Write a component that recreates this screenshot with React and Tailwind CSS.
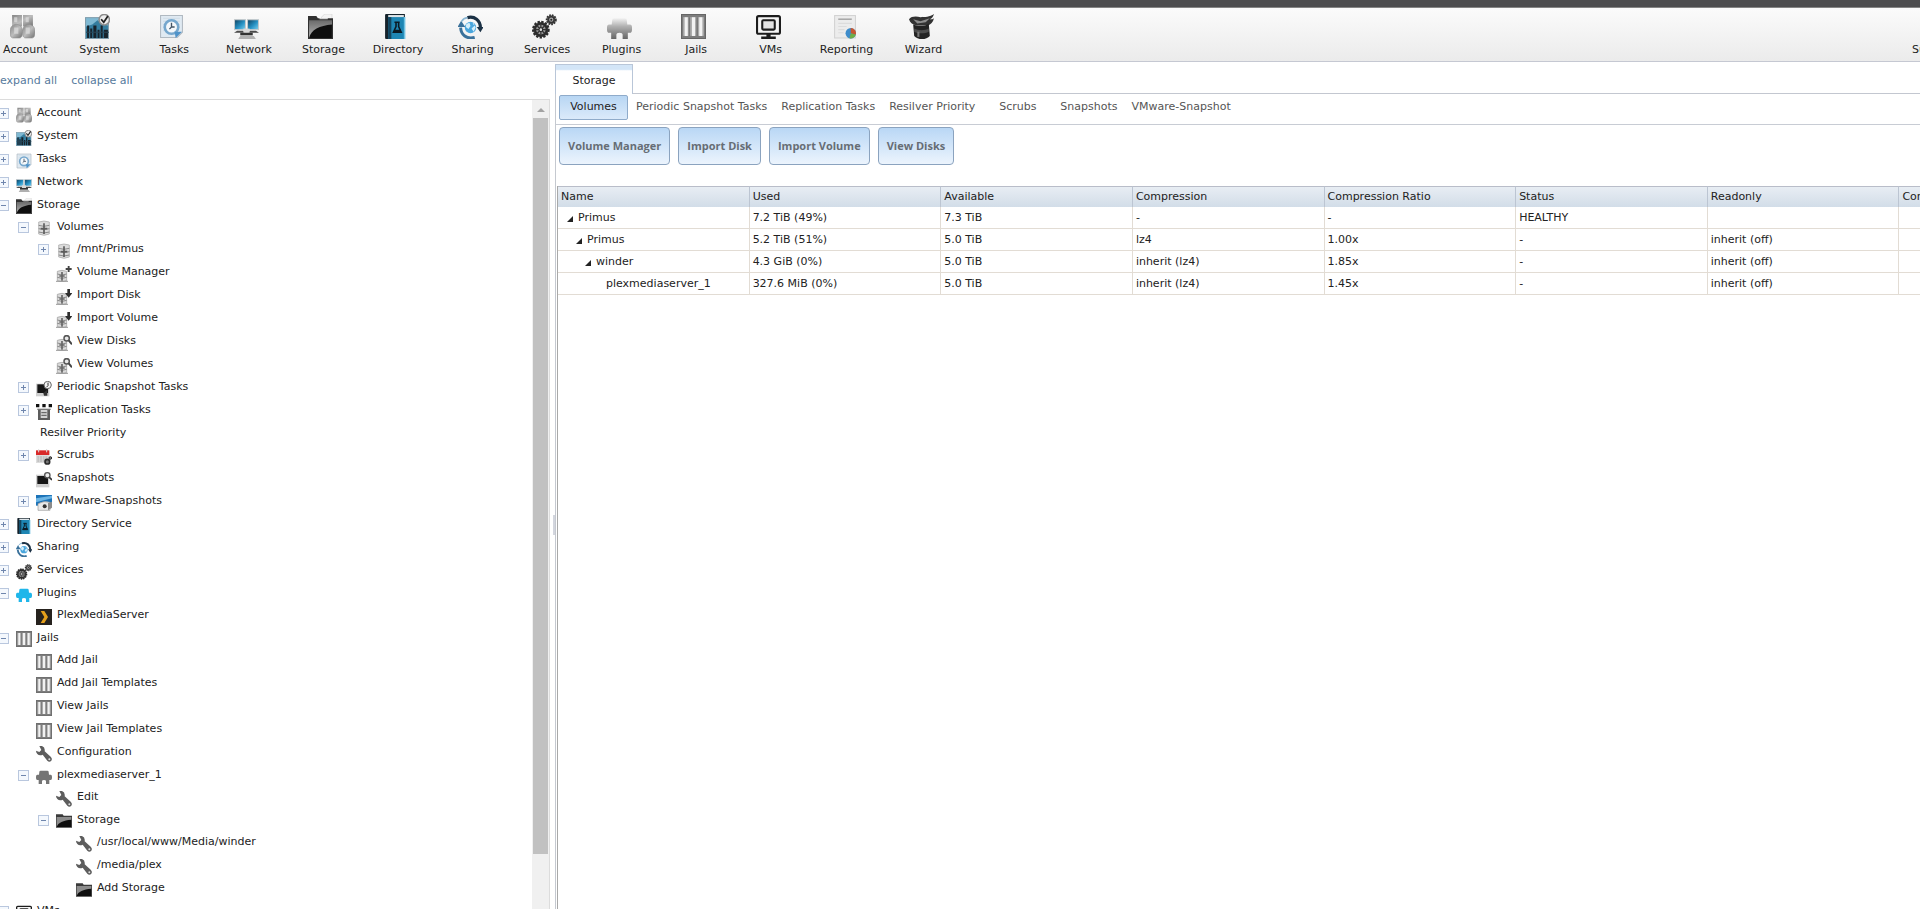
// src/App.jsx
import React, { useState } from "react";

/* ---------- Icons ---------- */

const AccountIcon = (props) => (
  <svg viewBox="0 0 24 24" {...props}>
    <defs>
      <linearGradient id="acc" x1="0" x2="1" y1="0" y2="1">
        <stop offset="0" stopColor="#858585" />
        <stop offset=".5" stopColor="#bdbdbd" />
        <stop offset="1" stopColor="#707070" />
      </linearGradient>
    </defs>
    <path d="M2 1h9.500v11H2zM12.500 1H22v11h-9.500z" fill="url(#acc)" />
    <path d="M0 17c0-5 3-7 6-7s6 2 6 7c0 4-1 6-3 6H3c-2 0-3-2-3-6z" fill="url(#acc)" stroke="#8d8d8d" strokeWidth=".6" />
    <path d="M12 17c0-5 3-7 6-7s6 2 6 7c0 4-1 6-3 6h-6c-2 0-3-2-3-6z" fill="url(#acc)" stroke="#8d8d8d" strokeWidth=".6" />
    <path d="M4 3h3v5H4zM15 3h3v5h-3zM4 13h4v6H4zM15 13h4v6h-4z" fill="#dedede" opacity=".7" />
  </svg>
);

const SystemIcon = (props) => (
  <svg viewBox="0 0 24 24" {...props}>
    <rect x=".5" y="3.500" width="22" height="20" fill="#7fb9d3" stroke="#7f9dac" />
    <path d="M1 12l6-2 5-4 6 4 4 1v12H1z" fill="#347d9f" />
    <path d="M2 11h2v12H2zM5 14h2v9H5zM8 11h3v12H8zM12 15h2v8h-2zM15 11h2v12h-2zM18 15h4v8h-4z" fill="#17232c" />
    <path d="M1 17h22v1H1z" fill="#2a4656" />
    <circle cx="18.500" cy="5.500" r="5" fill="#eee" stroke="#8c8c8c" strokeWidth="1.500" />
    <path d="M15.500 5l2.500 3 4-6" fill="none" stroke="#222" strokeWidth="1.700" />
  </svg>
);

const TasksIcon = (props) => (
  <svg viewBox="0 0 24 24" {...props}>
    <path d="M1.500 1.500h21v16l-5 5h-16z" fill="#e0eaf2" stroke="#b0b9c1" />
    <path d="M4 4h16M4 7h16M4 10h16M4 13h16M4 16h13" stroke="#cddbe6" />
    <circle cx="12" cy="12.500" r="6.500" fill="#f4f8fb" stroke="#76a7cd" strokeWidth="2.500" />
    <path d="M12 8.500v4h3M12 12.500l-2 2" stroke="#456" strokeWidth="1.300" fill="none" />
    <path d="M15 17h7l-6 6z" fill="#4f93c9" />
  </svg>
);

const NetworkIcon = (props) => (
  <svg viewBox="0 0 24 24" {...props}>
    <defs>
      <linearGradient id="scr" x1="0" x2="1" y1="0" y2="1">
        <stop offset="0" stopColor="#0f3f5c" />
        <stop offset=".55" stopColor="#2691c4" />
        <stop offset="1" stopColor="#7fd0ee" />
      </linearGradient>
    </defs>
    <rect x=".5" y="5.500" width="10.500" height="9.500" fill="url(#scr)" stroke="#c3c8cb" />
    <rect x="13" y="5.500" width="10.500" height="9.500" fill="url(#scr)" stroke="#c3c8cb" />
    <path d="M3 16h6l1 2H0zM15 16h6l3 2H14z" fill="#4a4a4a" />
    <path d="M9 14h6v4H9z" fill="#d9d9d9" />
    <path d="M6 18h12v2.500H6z" fill="#333" />
    <path d="M6 21h13l2 3H4z" fill="#b0b0b0" />
  </svg>
);

const StorageIcon = (props) => (
  <svg viewBox="0 0 24 24" {...props}>
    <defs>
      <linearGradient id="fld" x1="0" x2="0" y1="0" y2="1">
        <stop offset="0" stopColor="#6b6b6b" />
        <stop offset="1" stopColor="#b5b5b5" />
      </linearGradient>
    </defs>
    <path d="M13 3l3-3h7v6H13z" fill="#f3f3f3" stroke="#d0d0d0" strokeWidth=".6" />
    <path d="M0 2h8l1.500 2H24v20H0z" fill="#303030" />
    <path d="M1 6h22v17H1z" fill="url(#fld)" />
    <path d="M1 23C3 15 11 11 23 10v13z" fill="#0e0e0e" />
    <path d="M11 4h8v1h-8z" fill="#e9e9e9" />
  </svg>
);

const DirectoryIcon = (props) => (
  <svg viewBox="0 0 24 24" {...props}>
    <path d="M2 1q0-1 1-1h18v3H6v21H3q-1 0-1-1z" fill="#16232c" />
    <path d="M5 1h15v2H5z" fill="#dfe6ea" />
    <path d="M5 3h16v21H5z" fill="#1e86b4" />
    <path d="M5 3h3v21H5z" fill="#14455f" />
    <path d="M20 3h1.500v21H20z" fill="#6fc1e2" />
    <path d="M11 8h5M12.500 8v4L10 17.500h7.500L15 12V8" fill="none" stroke="#0b1a24" strokeWidth="1.500" />
    <path d="M11 15h5.500l1 2.500H10z" fill="#0b1a24" />
  </svg>
);

const SharingIcon = (props) => (
  <svg viewBox="0 0 24 24" {...props}>
    <circle cx="12" cy="13" r="5.500" fill="#4aa6dd" />
    <path d="M8 9.500l3-1 1 3-2 3-2.500-2zM13 14l3-3 1 2-2 4zM14 8.500l2 1-1 1z" fill="#d6effb" />
    <path d="M9 3.500c7-2 12.500 3 12.500 9.500" fill="none" stroke="#1b3145" strokeWidth="3" />
    <path d="M18 12.500h6.500l-3 5z" fill="#1b3145" />
    <path d="M16 22.500C8 24.500 3 20 2.500 13" fill="none" stroke="#3a719b" strokeWidth="2.800" />
    <path d="M-.5 12.500l3.500-6 4 6z" fill="#3a719b" />
    <path d="M3.500 7C5 4.500 7 3.800 9 3.500" fill="none" stroke="#8ab6d3" strokeWidth="1.500" />
  </svg>
);

const ServicesIcon = (props) => (
  <svg viewBox="0 0 24 24" {...props}>
    <circle cx="8.500" cy="15" r="7.400" fill="#555" stroke="#2b2b2b" strokeWidth="2.200" strokeDasharray="2.200 1.300" />
    <circle cx="8.500" cy="15" r="5.600" fill="#9b9b9b" stroke="#2b2b2b" strokeWidth="2" />
    <path d="M8.500 10v10M3.500 15h10M5 11.500l7 7M12 11.500l-7 7" stroke="#333" strokeWidth="1.200" />
    <circle cx="8.500" cy="15" r="1.800" fill="#ddd" stroke="#222" />
    <circle cx="18.500" cy="5.500" r="4.400" fill="#777" stroke="#333" strokeWidth="1.800" strokeDasharray="1.600 1" />
    <circle cx="18.500" cy="5.500" r="2.800" fill="#aaa" stroke="#333" strokeWidth="1.500" />
    <circle cx="18.500" cy="5.500" r="1" fill="#222" />
  </svg>
);

const plugPath =
  "M7 4h10q2 0 2 2l.5 4H22q2 0 2 3v2q0 3-2 3h-2v6h-5v-4q0-2-3-2t-3 2v4H4v-6H2q-2 0-2-3v-2q0-3 2-3h2.500L5 6q0-2 2-2z";

const PluginsIcon = (props) => (
  <svg viewBox="0 0 24 24" {...props}>
    <defs>
      <linearGradient id="plg" x1="0" x2="0" y1="0" y2="1">
        <stop offset="0" stopColor="#f2f2f2" />
        <stop offset=".4" stopColor="#b0b0b0" />
        <stop offset="1" stopColor="#666" />
      </linearGradient>
    </defs>
    <path d={plugPath} fill="url(#plg)" />
  </svg>
);

const PluginsBlueIcon = (props) => (
  <svg viewBox="0 0 24 24" {...props}>
    <path d={plugPath} fill="#1fb6ea" />
  </svg>
);

const PluginsGrayIcon = (props) => (
  <svg viewBox="0 0 24 24" {...props}>
    <path d={plugPath} fill="#757575" />
  </svg>
);

const JailsIcon = (props) => (
  <svg viewBox="0 0 24 24" {...props}>
    <rect width="24" height="24" fill="#7d7d7d" />
    <path d="M2 3h20v18H2z" fill="#a9a9a9" />
    <path d="M3.500 3h3v18h-3zM10.500 3h3v18h-3zM17.500 3h3v18h-3z" fill="#f2f2f2" />
    <path d="M8 3v18M15.500 3v18" stroke="#757575" strokeWidth="1.500" />
    <path d="M.5.500h23v23H.5z" fill="none" stroke="#666" />
  </svg>
);

const VMsIcon = (props) => (
  <svg viewBox="0 0 24 24" {...props}>
    <rect x="1" y="2" width="22" height="17" rx="1.500" fill="#f4f4f4" stroke="#1c1c1c" strokeWidth="2" />
    <rect x="6" y="6" width="12" height="9" rx="1" fill="#e3e3e3" stroke="#1c1c1c" strokeWidth="2" />
    <path d="M10 19h4v3h-4zM5 21.500h14V24H5z" fill="#1c1c1c" />
  </svg>
);

const ReportingIcon = (props) => (
  <svg viewBox="0 0 24 24" {...props}>
    <rect x="2.500" y="1.500" width="20" height="21.500" fill="#ececec" stroke="#d2d2d2" />
    <path d="M6 5h13" stroke="#a9a9a9" strokeWidth="1.500" />
    <path d="M6 9h13M6 12h8M6 15h6M6 18h5" stroke="#dcdcdc" />
    <circle cx="18" cy="18.500" r="5" fill="#3f8dcb" />
    <path d="M18 18.500V13.500a5 5 0 014.800 6.500z" fill="#c9562f" />
    <path d="M18 18.500l4.800 1.500a5 5 0 01-6 3.300z" fill="#6fae45" />
  </svg>
);

const WizardIcon = (props) => (
  <svg viewBox="0 0 24 24" {...props}>
    <path d="M0 5c2-3 7-3 11-2 4 0 9 0 13-3-1 3-2 4-4 5 2 0 3 0 4-1-1 4-3 6-6 7H7C3 10 1 8 0 5z" fill="#333" />
    <path d="M4 5l7 2 9-3-4 4-8 1z" fill="#8d8d8d" />
    <path d="M4 10c4 2 12 2 15-1l1 12c-3 4-12 4-15 0z" fill="#232323" />
    <path d="M5 14c4 2 10 2 14 0v3c-4 2-10 2-14 0z" fill="#4c4c4c" />
    <path d="M8 17h2v5H8z" fill="#777" />
  </svg>
);

// small volume, leaves the top right corner free for a badge
const Disks = () => (
  <g>
    <path d="M2 8q7-3 14 0v14q-7 3-14 0z" fill="#dadada" stroke="#9a9a9a" />
    <path d="M2 12q7 3 14 0M2 17q7 3 14 0" fill="none" stroke="#8a8a8a" strokeWidth="1.500" />
    <path d="M9 9v13M5 15h8" stroke="#666" strokeWidth="2.500" />
    <path d="M0 23h18" stroke="#999" strokeWidth="1.500" />
  </g>
);

const VolumeIcon = (props) => (
  <svg viewBox="0 0 24 24" {...props}>
    <path d="M4 3q8-3 16 0v18q-8 4-16 0z" fill="#dcdcdc" stroke="#a5a5a5" />
    <path d="M4 8q8 3 16 0M4 13q8 3 16 0M4 18q8 3 16 0" fill="none" stroke="#8a8a8a" strokeWidth="1.500" />
    <path d="M12 5v16M7 13h10" stroke="#5c5c5c" strokeWidth="2.500" />
  </svg>
);

const VolumeAddIcon = (props) => (
  <svg viewBox="0 0 24 24" {...props}>
    <Disks />
    <path d="M19 0v9M14.500 4.500h9" stroke="#444" strokeWidth="2.800" />
  </svg>
);

const VolumeImportIcon = (props) => (
  <svg viewBox="0 0 24 24" {...props}>
    <Disks />
    <path d="M17 0h4v6h3.500L19 13l-5.500-7H17z" fill="#2e2e2e" />
  </svg>
);

const VolumeViewIcon = (props) => (
  <svg viewBox="0 0 24 24" {...props}>
    <Disks />
    <circle cx="16" cy="5" r="4" fill="#e8e8e8" stroke="#555" strokeWidth="2.200" />
    <path d="M19 8l5 6" stroke="#444" strokeWidth="3" />
  </svg>
);

const PeriodicIcon = (props) => (
  <svg viewBox="0 0 24 24" {...props}>
    <path d="M0 4h20v19H0z" fill="#cfcfcf" />
    <path d="M2 5h16v13H2z" fill="#161616" />
    <circle cx="17.500" cy="6" r="5.500" fill="#f3f3f3" stroke="#666" strokeWidth="1.500" />
    <path d="M18 2.500V7l-2 2" fill="none" stroke="#333" strokeWidth="1.500" />
    <path d="M11 18l6-5v9h-5z" fill="#333" />
  </svg>
);

const ReplicationIcon = (props) => (
  <svg viewBox="0 0 24 24" {...props}>
    <path d="M0 0h5v5H0zM9.500 0h5v5h-5zM19 0h5v5h-5z" fill="#111" />
    <path d="M2 7h20v2H2z" fill="#777" />
    <path d="M3 9h18v15H3z" fill="#5c5c5c" />
    <path d="M7 9h10v12H7z" fill="#d2d2d2" />
    <path d="M8 13h8M8 17h8" stroke="#555" strokeWidth="1.500" />
  </svg>
);

const ScrubsIcon = (props) => (
  <svg viewBox="0 0 24 24" {...props}>
    <path d="M0 4h20v17H0z" fill="#ddd" />
    <path d="M0 2h20v7H0z" fill="#d92a2a" />
    <path d="M4 0v5M16 0v5" stroke="#ddd" strokeWidth="1.500" />
    <path d="M2 12h16M2 15h16M2 18h10" stroke="#aaa" strokeWidth="1.500" strokeDasharray="3 1" />
    <circle cx="17" cy="19" r="3.500" fill="#777" stroke="#2b2b2b" strokeWidth="2.500" />
    <circle cx="21.500" cy="13.500" r="2" fill="#777" stroke="#333" strokeWidth="1.500" />
  </svg>
);

const SnapshotsIcon = (props) => (
  <svg viewBox="0 0 24 24" {...props}>
    <path d="M0 4h20v19H0z" fill="#cfcfcf" />
    <path d="M2 6h16v12H2z" fill="#161616" />
    <circle cx="17" cy="5" r="4" fill="#eee" stroke="#555" strokeWidth="2" />
    <path d="M20 8l4 4" stroke="#333" strokeWidth="2.500" />
  </svg>
);

const VMwareIcon = (props) => (
  <svg viewBox="0 0 24 24" {...props}>
    <path d="M0 0h24v16H0z" fill="#1c73b8" />
    <path d="M0 5L24 1v4L0 11z" fill="#6db5e4" />
    <path d="M3 13q9-5 18-2v12H3z" fill="#e9e9e9" stroke="#999" />
    <circle cx="13" cy="17" r="3" fill="#333" />
    <path d="M18 12l6-2v9l-6 4z" fill="#8b8b8b" />
  </svg>
);

const PlexIcon = (props) => (
  <svg viewBox="0 0 24 24" {...props}>
    <path d="M0 0h24v24H0z" fill="#26221e" />
    <path d="M7 3h5.500L18 12l-5.500 9H7l5.500-9z" fill="#e5a01b" />
  </svg>
);

const WrenchIcon = (props) => (
  <svg viewBox="0 0 24 24" {...props}>
    <path
      d="M5 0h4q5 2 4 8l9 8q3 3 1 6-3 3-6 0l-7-9q-5 2-8-1-2-2-2-5l5 2 3-3z"
      fill="#5d5d5d"
    />
    <circle cx="20" cy="20" r="1.500" fill="#ddd" />
  </svg>
);

const FolderIcon = (props) => (
  <svg viewBox="0 0 24 24" {...props}>
    <path d="M0 2h10l1.500 2H24v18H0z" fill="#3a3a3a" />
    <path d="M1 6h22v15H1z" fill="#8c8c8c" />
    <path d="M1 21C3 14 11 11 23 10v11z" fill="#0e0e0e" />
  </svg>
);

/* ---------- Data ---------- */

const toolbar = [
  { label: "Account", Icon: AccountIcon },
  { label: "System", Icon: SystemIcon },
  { label: "Tasks", Icon: TasksIcon },
  { label: "Network", Icon: NetworkIcon },
  { label: "Storage", Icon: StorageIcon },
  { label: "Directory", Icon: DirectoryIcon },
  { label: "Sharing", Icon: SharingIcon },
  { label: "Services", Icon: ServicesIcon },
  { label: "Plugins", Icon: PluginsIcon },
  { label: "Jails", Icon: JailsIcon },
  { label: "VMs", Icon: VMsIcon },
  { label: "Reporting", Icon: ReportingIcon },
  { label: "Wizard", Icon: WizardIcon },
];

const tree = [
  { label: "Account", Icon: AccountIcon, kids: [] },
  { label: "System", Icon: SystemIcon, kids: [] },
  { label: "Tasks", Icon: TasksIcon, kids: [] },
  { label: "Network", Icon: NetworkIcon, kids: [] },
  {
    label: "Storage",
    Icon: StorageIcon,
    kids: [
      {
        label: "Volumes",
        Icon: VolumeIcon,
        kids: [
          { label: "/mnt/Primus", Icon: VolumeIcon, kids: [] },
          { label: "Volume Manager", Icon: VolumeAddIcon },
          { label: "Import Disk", Icon: VolumeImportIcon },
          { label: "Import Volume", Icon: VolumeImportIcon },
          { label: "View Disks", Icon: VolumeViewIcon },
          { label: "View Volumes", Icon: VolumeViewIcon },
        ],
      },
      { label: "Periodic Snapshot Tasks", Icon: PeriodicIcon, kids: [] },
      { label: "Replication Tasks", Icon: ReplicationIcon, kids: [] },
      { label: "Resilver Priority" },
      { label: "Scrubs", Icon: ScrubsIcon, kids: [] },
      { label: "Snapshots", Icon: SnapshotsIcon },
      { label: "VMware-Snapshots", Icon: VMwareIcon, kids: [] },
    ],
  },
  { label: "Directory Service", Icon: DirectoryIcon, kids: [] },
  { label: "Sharing", Icon: SharingIcon, kids: [] },
  { label: "Services", Icon: ServicesIcon, kids: [] },
  {
    label: "Plugins",
    Icon: PluginsBlueIcon,
    kids: [{ label: "PlexMediaServer", Icon: PlexIcon }],
  },
  {
    label: "Jails",
    Icon: JailsIcon,
    kids: [
      { label: "Add Jail", Icon: JailsIcon },
      { label: "Add Jail Templates", Icon: JailsIcon },
      { label: "View Jails", Icon: JailsIcon },
      { label: "View Jail Templates", Icon: JailsIcon },
      { label: "Configuration", Icon: WrenchIcon },
      {
        label: "plexmediaserver_1",
        Icon: PluginsGrayIcon,
        kids: [
          { label: "Edit", Icon: WrenchIcon },
          {
            label: "Storage",
            Icon: FolderIcon,
            kids: [
              { label: "/usr/local/www/Media/winder", Icon: WrenchIcon },
              { label: "/media/plex", Icon: WrenchIcon },
              { label: "Add Storage", Icon: FolderIcon },
            ],
          },
        ],
      },
    ],
  },
  { label: "VMs", Icon: VMsIcon, kids: [] },
];

const subTabs = [
  "Volumes",
  "Periodic Snapshot Tasks",
  "Replication Tasks",
  "Resilver Priority",
  "Scrubs",
  "Snapshots",
  "VMware-Snapshot",
];

const actions = ["Volume Manager", "Import Disk", "Import Volume", "View Disks"];

const columns = [
  "Name",
  "Used",
  "Available",
  "Compression",
  "Compression Ratio",
  "Status",
  "Readonly",
  "Comments",
];

const volumes = [
  ["Primus", "7.2 TiB (49%)", "7.3 TiB", "-", "-", "HEALTHY", "", ""],
  ["Primus", "5.2 TiB (51%)", "5.0 TiB", "lz4", "1.00x", "-", "inherit (off)", ""],
  ["winder", "4.3 GiB (0%)", "5.0 TiB", "inherit (lz4)", "1.85x", "-", "inherit (off)", ""],
  ["plexmediaserver_1", "327.6 MiB (0%)", "5.0 TiB", "inherit (lz4)", "1.45x", "-", "inherit (off)", ""],
];

const nameIndent = ["pl-1", "pl-[13px]", "pl-[22px]", "pl-8"];

/* ---------- Components ---------- */

function TreeNode({ node, forced }) {
  const { label, Icon, kids } = node;
  const [open, setOpen] = useState(Boolean(kids && kids.length));
  const expanded = forced === null ? open : forced;
  const showKids = expanded && kids && kids.length > 0;

  return (
    <li>
      <div className={`flex items-center ${showKids || !Icon ? "h-[22px]" : "h-[23px]"}`}>
        {kids ? (
          <button
            aria-label={`Toggle ${label}`}
            onClick={() => setOpen(!open)}
            className="mr-[7px] flex size-[11px] shrink-0 items-center justify-center border border-[#b9c7de] bg-[#f4f8fd]"
          >
            <svg viewBox="0 0 7 7" className="size-[7px]">
              <path d={showKids ? "M1 3.500h5" : "M1 3.500h5M3.500 1v5"} stroke="#6f86ad" />
            </svg>
          </button>
        ) : (
          <span className="w-[18px] shrink-0" />
        )}
        {Icon && <Icon className="mt-[2px] size-4 shrink-0" />}
        <a href="#" className={`whitespace-nowrap ${Icon ? "pl-[5px]" : "pl-1"}`}>
          {label}
        </a>
      </div>
      {showKids && (
        <ul className="pl-5">
          {kids.map((kid) => (
            <TreeNode key={kid.label} node={kid} forced={forced} />
          ))}
        </ul>
      )}
    </li>
  );
}

function Toolbar() {
  return (
    <header className="flex h-[54px] shrink-0 justify-between border-b border-[#c5c8d2] bg-linear-to-b from-[#fbfbfb] to-[#ebebeb]">
      <nav className="-ml-3 grid w-[974px] shrink-0 grid-cols-[repeat(11,minmax(0,1fr))_77px_77px]">
        {toolbar.map(({ label, Icon }) => (
          <button key={label} className="flex flex-col items-center pt-[6px]">
            <Icon className="mr-[5px] size-[25px]" />
            <span className="mt-[3px] leading-4">{label}</span>
          </button>
        ))}
      </nav>
      <button className="flex w-2 items-start overflow-hidden pt-[34px]">
        <span className="leading-4">Support</span>
      </button>
    </header>
  );
}

function Sidebar() {
  const [forced, setForced] = useState(null);

  return (
    <aside className="flex w-[550px] shrink-0 flex-col">
      <div className="flex h-[37px] items-center gap-[14px] pt-[2px] text-[#567a9c]">
        <button onClick={() => setForced(true)}>expand all</button>
        <button onClick={() => setForced(false)}>collapse all</button>
      </div>
      <div className="flex min-h-0 flex-1 border-t border-r border-[#dcdcdc]">
        <ul className="-ml-[2px] min-w-0 flex-1 overflow-hidden pt-[2px]">
          {tree.map((node) => (
            <TreeNode key={node.label} node={node} forced={forced} />
          ))}
        </ul>
        <div className="flex w-[17px] flex-col items-center bg-[#f0f0f0]">
          <svg viewBox="0 0 17 18" className="h-[18px] w-[17px] shrink-0">
            <path d="M5 12l4-4 4 4z" fill="#a3a3a3" />
          </svg>
          <div className="min-h-0 w-full flex-1 px-[1px]">
            <div className="h-[93%] bg-[#c1c1c1]" />
          </div>
        </div>
      </div>
    </aside>
  );
}

function VolumesTable() {
  return (
    <div className="flex-1 overflow-hidden border-l border-[#a9a9a9]">
      <table className="w-[1533px] table-fixed border-separate border-spacing-0 text-left">
        <thead>
          <tr className="h-[21px] bg-linear-to-b from-[#e9eef4] to-[#d2dde8]">
            {columns.map((col) => (
              <th
                key={col}
                className="border-t border-r border-t-[#b9bdc9] border-r-[#bcc5d2] p-0 pl-[3px] font-normal"
              >
                {col}
              </th>
            ))}
          </tr>
        </thead>
        <tbody>
          {volumes.map((row, i) => (
            <tr key={i} className="h-[22px]">
              {row.map((cell, j) => (
                <td key={j} className="border-r border-b border-[#e2dcd4] p-0 pl-[3px] leading-4">
                  {j === 0 ? (
                    <div className={`flex items-center ${nameIndent[i]}`}>
                      <svg viewBox="0 0 12 8" className="mr-[1px] h-2 w-3 shrink-0">
                        {i < 3 && <path d="M2 8h6V2z" fill="#222" />}
                      </svg>
                      {cell}
                    </div>
                  ) : (
                    cell
                  )}
                </td>
              ))}
            </tr>
          ))}
        </tbody>
      </table>
    </div>
  );
}

export default function App() {
  const [tab, setTab] = useState("Volumes");

  return (
    <div className="flex h-screen flex-col overflow-hidden bg-white font-['DejaVu_Sans',Verdana,sans-serif] text-[11px] text-[#222]">
      <div className="h-2 shrink-0 border-b border-[#858585] bg-[#4d4d4f]" />
      <Toolbar />

      <div className="flex min-h-0 flex-1">
        <Sidebar />

        {/* splitter */}
        <div className="flex w-[5px] shrink-0 items-center justify-end pt-[78px]">
          <div className="h-5 w-[2px] bg-[#d3d6de]" />
        </div>

        <main className="flex min-w-0 flex-1 flex-col pt-[2px]">
          <div className="flex h-[30px] shrink-0">
            <button className="w-[78px] border border-b-0 border-[#b9c6d8] bg-linear-to-b from-[#d3e5f7] from-15% to-white to-20% pt-1">
              Storage
            </button>
            <div className="flex-1 border-b border-[#c3c7d0]" />
          </div>

          <div className="flex min-h-0 flex-1 flex-col border-l border-[#c5c9d0]">
            <div className="flex h-[31px] shrink-0 gap-[2px] border-b border-[#c8ccd4] pt-[1px] pb-[4px] pl-[3px] text-[#555]">
              {subTabs.map((name) => (
                <button
                  key={name}
                  onClick={() => setTab(name)}
                  className={`min-w-[69px] rounded-[2px] border px-[5px] whitespace-nowrap ${
                    name === tab
                      ? "border-[#8fabca] bg-linear-to-b from-[#b8d6f3] to-[#dbeafa] text-[#222]"
                      : "border-transparent"
                  }`}
                >
                  {name}
                </button>
              ))}
            </div>

            <div className="flex gap-2 pt-[2px] pb-[21px] pl-[3px]">
              {actions.map((name) => (
                <button
                  key={name}
                  className="h-[38px] rounded-[4px] border border-[#8ba3bf] bg-linear-to-b from-[#b9d7f5] to-[#ecf4fd] px-2 font-['Open_Sans',sans-serif] font-bold whitespace-nowrap text-[#666d75]"
                >
                  {name}
                </button>
              ))}
            </div>

            <div className="flex min-h-0 flex-1 pl-[1px]">
              <VolumesTable />
            </div>
          </div>
        </main>
      </div>
    </div>
  );
}
